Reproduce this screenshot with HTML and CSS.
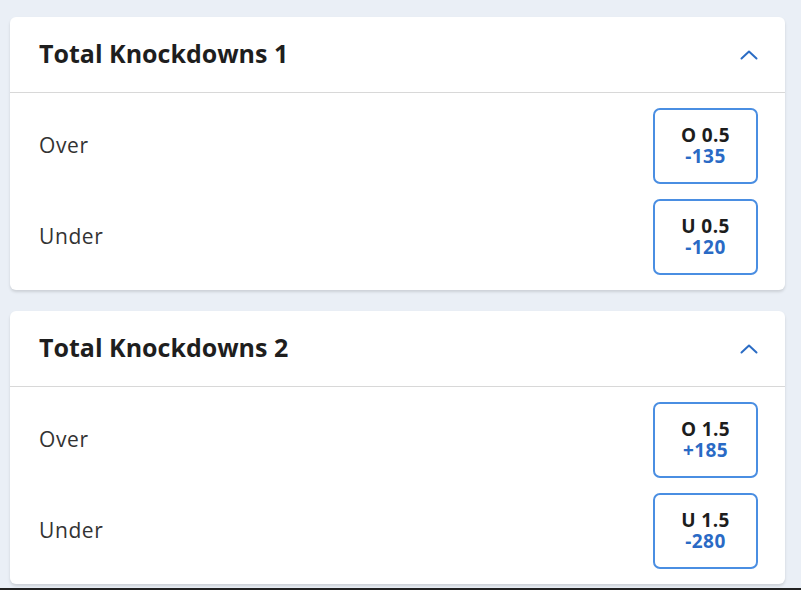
FILE: index.html
```html
<!DOCTYPE html>
<html lang="en">
<head>
    <meta charset="UTF-8">
    <title>Total Knockdowns</title>
    <link rel="stylesheet" href="styles.css">
</head>
<body>
    <div class="page">
        <!-- market 1 -->
        <div class="card">
            <div class="card-head">
                <div class="title">Total Knockdowns 1</div>
                <svg class="chevron" width="18" height="10" viewBox="0 0 18 10"><path d="M1.5 8.5 L9 1.5 L16.5 8.5" fill="none" stroke="#2b6cc4" stroke-width="2" stroke-linecap="round" stroke-linejoin="round"/></svg>
            </div>
            <div class="rows">
                <div class="row">
                    <span class="label">Over</span>
                    <button class="odds"><span class="line">O 0.5</span><span class="price">-135</span></button>
                </div>
                <div class="row">
                    <span class="label">Under</span>
                    <button class="odds"><span class="line">U 0.5</span><span class="price">-120</span></button>
                </div>
            </div>
        </div>
        <!-- market 2 -->
        <div class="card">
            <div class="card-head">
                <div class="title">Total Knockdowns 2</div>
                <svg class="chevron" width="18" height="10" viewBox="0 0 18 10"><path d="M1.5 8.5 L9 1.5 L16.5 8.5" fill="none" stroke="#2b6cc4" stroke-width="2" stroke-linecap="round" stroke-linejoin="round"/></svg>
            </div>
            <div class="rows">
                <div class="row">
                    <span class="label">Over</span>
                    <button class="odds"><span class="line">O 1.5</span><span class="price">+185</span></button>
                </div>
                <div class="row">
                    <span class="label">Under</span>
                    <button class="odds"><span class="line">U 1.5</span><span class="price">-280</span></button>
                </div>
            </div>
        </div>
    </div>
</body>
</html>
```

FILE: styles.css
```css
/* page */
body, html {
    margin: 0;
    padding: 0;
    height: 100%;
    overflow: hidden;
}
body {
    background-color: #eaeff6;
    font-family: 'Open Sans', 'Lato', sans-serif;
    box-sizing: border-box;
    border-bottom: 2px solid #222;
}
.page {
    display: flex;
    flex-direction: column;
    gap: 21px;
    padding: 17px 16px 0 10px;
}
/* market card */
.card {
    background-color: #fff;
    border-radius: 6px;
    box-shadow: 0 2px 3px rgba(0, 0, 0, 0.13);
}
.card-head {
    height: 75px;
    display: flex;
    align-items: center;
    justify-content: space-between;
    padding: 0 27px 0 29px;
    border-bottom: 1px solid #d8d8d8;
}
.title {
    font-size: 25px;
    font-weight: bold;
    color: #1e1e1e;
    margin-top: -3px;
}
.chevron {
    display: block;
}
/* selection rows */
.rows {
    display: flex;
    flex-direction: column;
    gap: 15px;
    padding: 15px 27px 15px 29px;
}
.row {
    display: flex;
    align-items: center;
    justify-content: space-between;
}
.label {
    font-size: 21px;
    letter-spacing: 0.6px;
    color: #333;
    margin-top: -2px;
}
.odds {
    width: 105px;
    height: 76px;
    box-sizing: border-box;
    border: 2px solid #4a8ee2;
    border-radius: 7px;
    background-color: #fff;
    display: flex;
    flex-direction: column;
    align-items: center;
    justify-content: center;
    font-family: 'Open Sans', 'Lato', sans-serif;
    font-size: 19px;
    font-weight: bold;
    letter-spacing: 0.4px;
    line-height: 21px;
    padding: 0;
}
.line, .price {
    display: block;
    height: 21px;
}
.line {
    color: #1d1d1d;
}
.price {
    color: #2a6ac5;
}
```
